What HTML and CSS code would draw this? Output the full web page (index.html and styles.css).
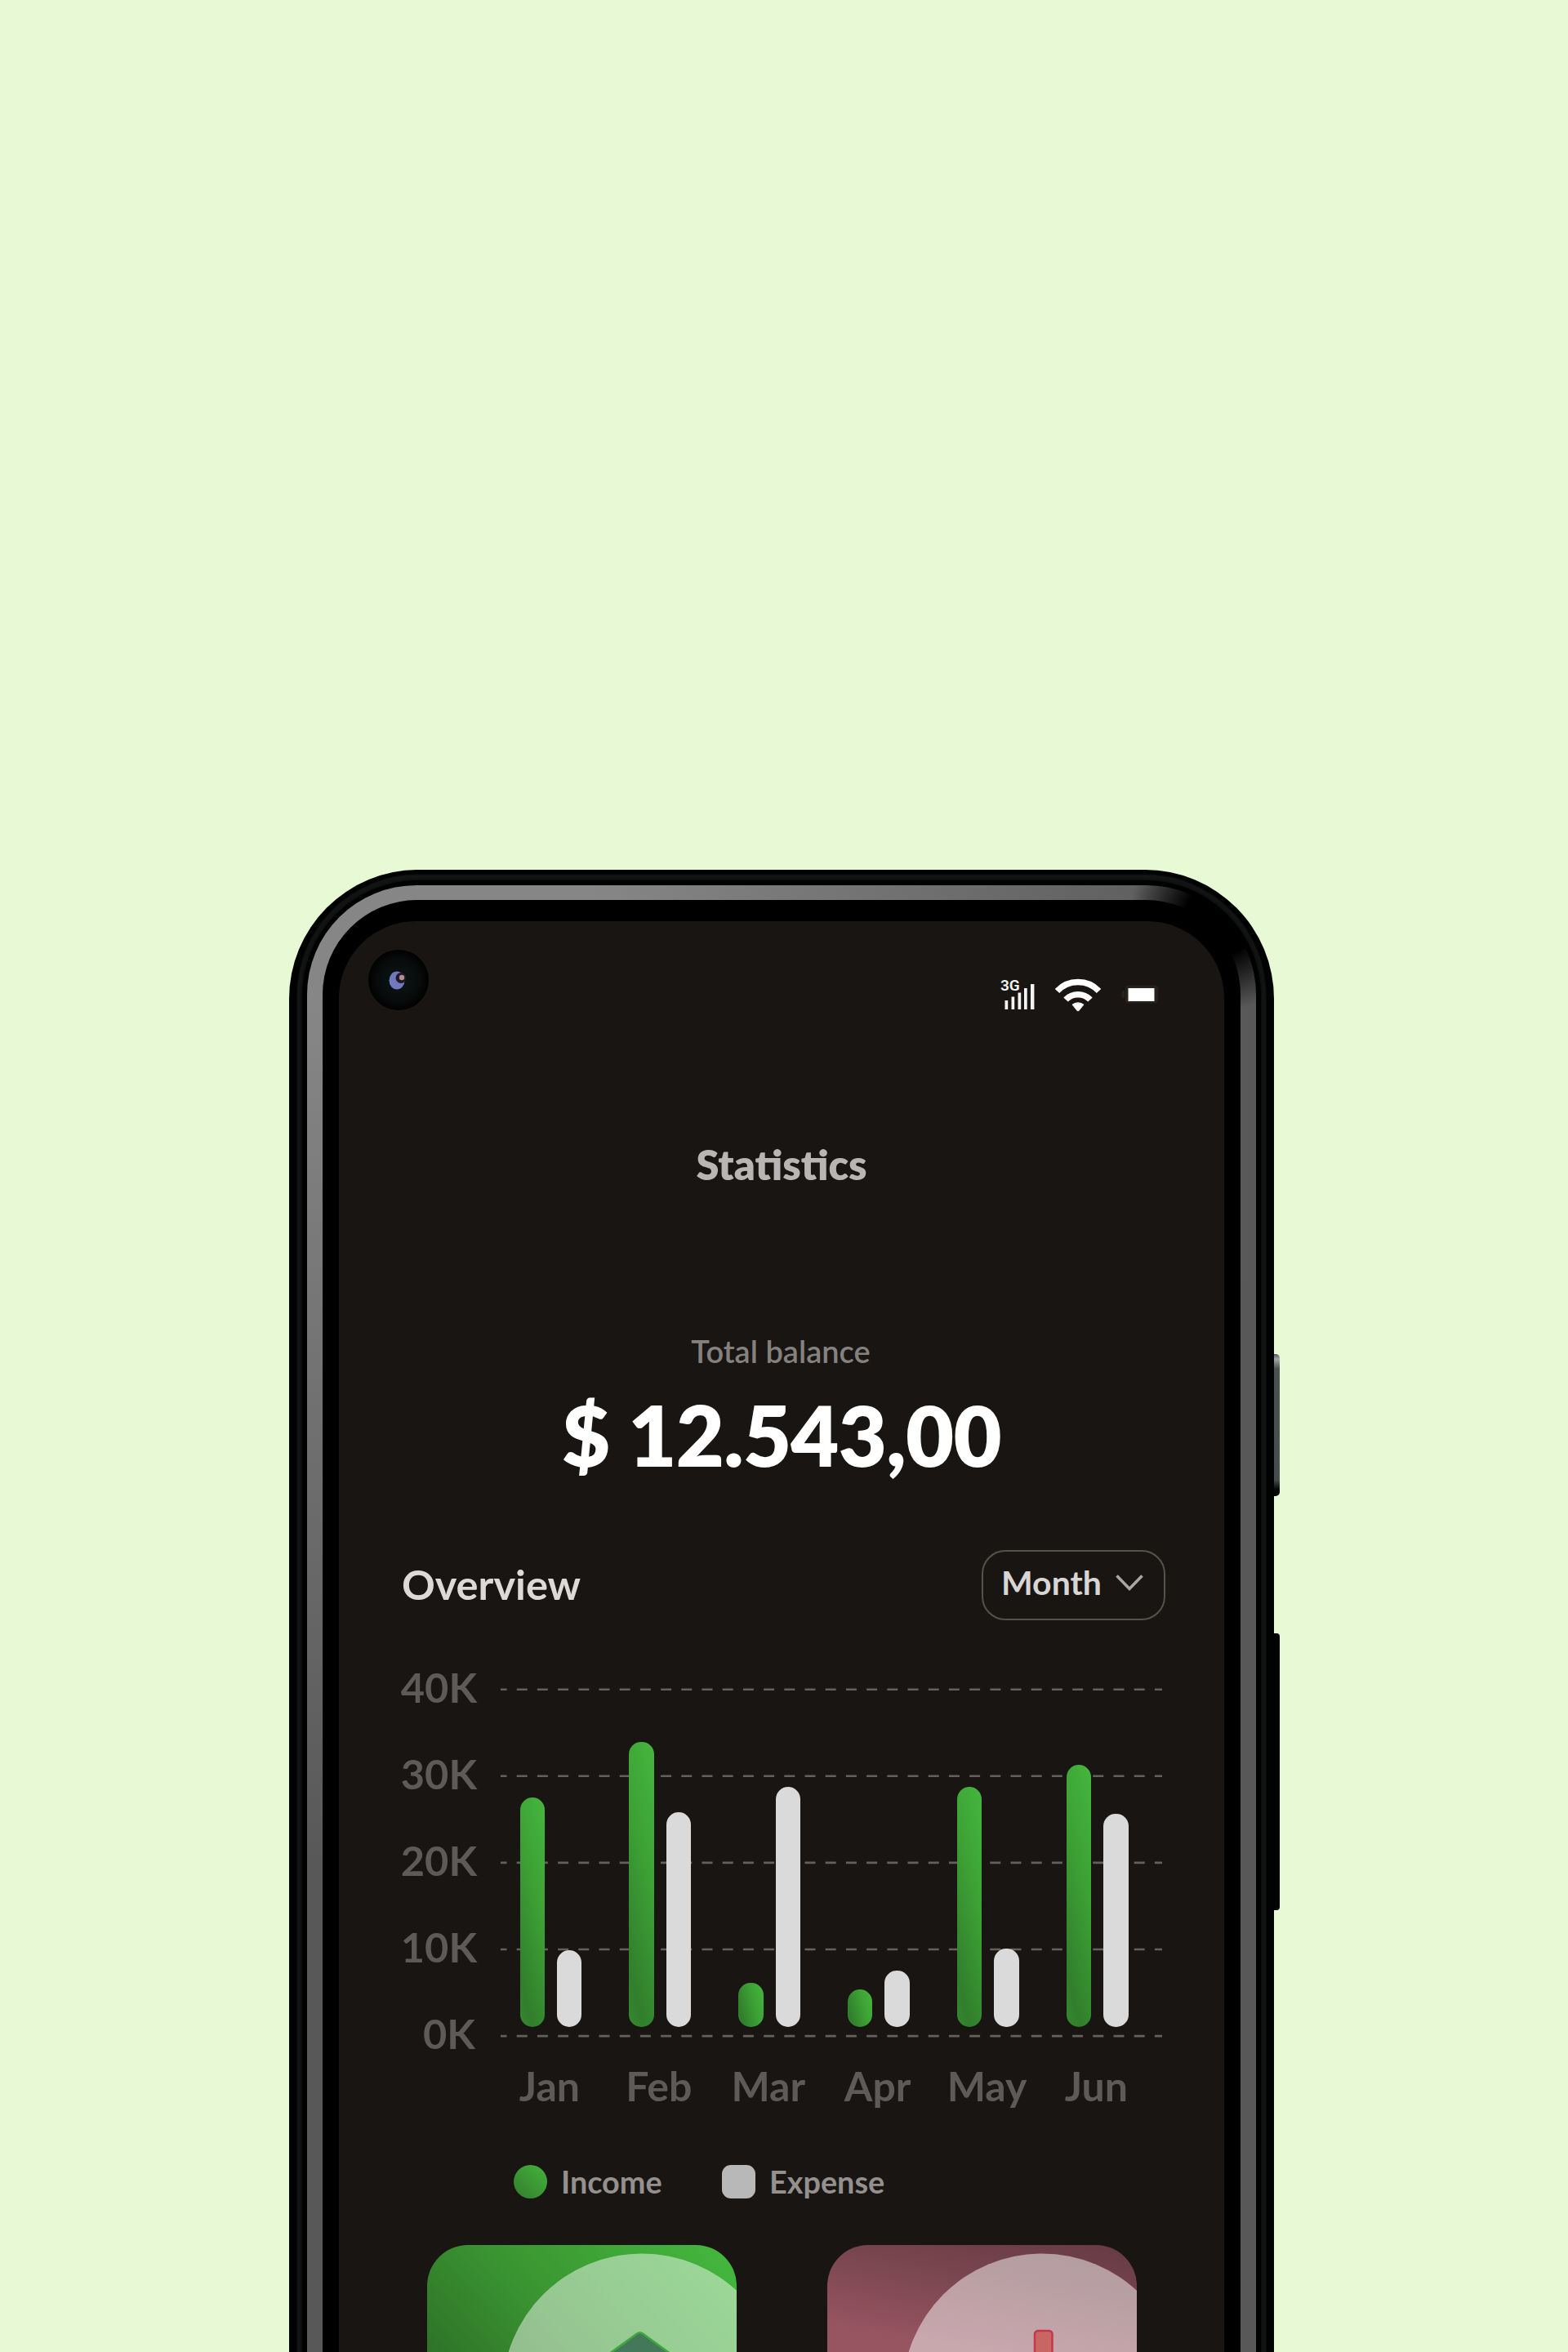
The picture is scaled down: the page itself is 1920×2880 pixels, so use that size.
FILE: index.html
```html
<!DOCTYPE html>
<html lang="en">
<head>
<meta charset="utf-8">
<title>Statistics</title>
<link rel="stylesheet" href="styles.css">
</head>
<body>
<main class="stage">
  <div class="phone">
    <span class="side-button power"></span>
    <span class="side-button volume"></span>
    <div class="shell"><div class="sheen"><div class="edge"><div class="ring"><div class="bezel">
      <div class="screen">
        <svg class="camera" width="76" height="76" viewBox="0 0 76 76">
          <defs>
            <radialGradient id="lens"><stop offset="0" stop-color="#0d1516"/><stop offset=".7" stop-color="#080b0b"/><stop offset="1" stop-color="#010101"/></radialGradient>
          </defs>
          <circle cx="38" cy="38" r="37" fill="url(#lens)"/>
          <ellipse cx="36" cy="38.500" rx="9.500" ry="11" fill="#7079bd"/>
          <circle cx="41" cy="35.500" r="6.500" fill="#1d1a26"/>
          <circle cx="42" cy="35" r="3.200" fill="#b58a92"/>
        </svg>

        <div class="status">
          <svg class="signal" width="44" height="49" viewBox="0 -8 44 49" fill="#f4f4f4">
            <text x="0" y="14.500" class="net">3G</text>
            <rect x="5.500" y="27" width="3.700" height="11"/>
            <rect x="13.500" y="22.500" width="3.700" height="15.500"/>
            <rect x="21.500" y="17.500" width="3.700" height="20.500"/>
            <rect x="29" y="12" width="3.700" height="26"/>
            <rect x="37" y="7" width="4.400" height="31"/>
          </svg>
          <svg class="wifi" width="56" height="41" viewBox="0 0 56 41">
            <g fill="none" stroke="#fff" stroke-width="7.500">
              <path d="M2.500 15.500C16 .8 40 .8 53.500 15.500"/>
              <path d="M13 26C21 17.500 35 17.500 43 26"/>
            </g>
            <path d="M20.500 32Q28 26.500 35.500 32L29.500 39.500Q28 41 26.500 39.500Z" fill="#fff"/>
          </svg>
          <svg class="battery" width="46" height="26" viewBox="0 0 46 26">
            <rect x="4" y="1.500" width="40" height="22" rx="4" fill="#26211f"/>
            <rect x="0" y="8" width="3" height="9" fill="#26211f"/>
            <rect x="7.500" y="5" width="32" height="16" fill="#fff"/>
          </svg>
        </div>

        <h1 class="title">Statistics</h1>
        <p class="balance-label">Total balance</p>
        <p class="balance">$ 12.543,00</p>

        <div class="overview">
          <h2 class="overview-title">Overview</h2>
          <div class="period">
            <span>Month</span>
            <svg width="34" height="22" viewBox="0 0 34 22"><path d="M1.500 2.500L17 18.500L32.500 2.500" fill="none" stroke="#aaa6a3" stroke-width="3.600"/></svg>
          </div>
        </div>

        <div class="chart">
          <div class="scale"><span>40K</span><span>30K</span><span>20K</span><span>10K</span><span class="zero">0K</span></div>
          <div class="plot">
            <svg class="lines" width="810" height="428" viewBox="0 0 810 428">
              <path d="M0 1.700H810M0 107.800H810M0 213.900H810M0 320H810M0 426.100H810" stroke="#64605d" stroke-width="2.600" stroke-dasharray="13 12.200" stroke-dashoffset="5.500"/>
            </svg>
            <div class="bars">
              <div class="pair"><i class="bar in" style="height:281px"></i><i class="bar out" style="height:94px"></i></div>
              <div class="pair"><i class="bar in" style="height:349px"></i><i class="bar out" style="height:263px"></i></div>
              <div class="pair"><i class="bar in" style="height:54px"></i><i class="bar out" style="height:294px"></i></div>
              <div class="pair"><i class="bar in" style="height:46px"></i><i class="bar out" style="height:69px"></i></div>
              <div class="pair"><i class="bar in" style="height:294px"></i><i class="bar out" style="height:96px"></i></div>
              <div class="pair"><i class="bar in" style="height:321px"></i><i class="bar out" style="height:261px"></i></div>
            </div>
          </div>
        </div>
        <div class="months"><span>Jan</span><span>Feb</span><span>Mar</span><span>Apr</span><span>May</span><span>Jun</span></div>

        <div class="legend">
          <i class="key income"></i><span class="income-text">Income</span>
          <i class="key expense"></i><span>Expense</span>
        </div>

        <div class="cards">
          <div class="card card-income">
            <svg width="379" height="400" viewBox="0 0 379 400">
              <circle cx="263" cy="181.500" r="171" fill="#fff" fill-opacity=".47"/>
              <path d="M257 108.500Q260.500 106 264 108.500L339 163V240H182V163Z" fill="#43795a" stroke="#3fa83d" stroke-width="2.500"/>
            </svg>
          </div>
          <div class="card card-expense">
            <svg width="379" height="400" viewBox="0 0 379 400">
              <circle cx="263" cy="181.500" r="171" fill="#fff" fill-opacity=".49"/>
              <rect x="254" y="105" width="21.500" height="150" rx="4" fill="#c86663" stroke="#c7374a" stroke-width="2.500"/>
            </svg>
          </div>
        </div>
      </div>
    </div></div></div></div></div>
  </div>
</main>
</body>
</html>
```
FILE: styles.css
```css
* { box-sizing: border-box; }
body { margin: 0; background: #e8f9d5; font-family: Lato, sans-serif; }
h1, h2, p { margin: 0; }
svg { display: block; flex: none; }

.stage { width: 1920px; height: 2880px; overflow: hidden; padding: 1065px 0 0 354px; }

/* Device body */
.phone { position: relative; width: 1206px; height: 1815px; }
.side-button { position: absolute; left: 1200px; width: 13px; }
.power { top: 593px; height: 174px; border-radius: 0 5px 5px 0; background: linear-gradient(#555 0, #a5a5a5 6px, #4c5152 18px, #474d4e 154px, #050505 166px); }
.volume { top: 935px; height: 339px; border-radius: 0 4px 4px 0; background: #000; }
.shell { position: relative; height: 1815px; padding: 6px 10px 0; background: #010302; border-radius: 158px 158px 0 0; }
.sheen { height: 100%; padding: 7px 6px 0; background: #121313; border-radius: 148px 148px 0 0; box-shadow: 0 0 3px #121313; }
.edge { height: 100%; padding: 6px 6px 0; background: #000; border-radius: 142px 142px 0 0; box-shadow: 0 0 3px #000; }
.ring {
  height: 100%; padding: 18px 19px 0; border-radius: 134px 134px 0 0;
  background:
    radial-gradient(circle at 1118px 42px, #000 44px, rgba(0,0,0,0) 112px),
    linear-gradient(rgba(88,88,88,0) 150px, #585858 1200px),
    linear-gradient(to right, #868686 30%, #585858);
}
.bezel { height: 100%; padding: 26px 20px 0; background: #000; border-radius: 116px 116px 0 0; }
.screen {
  position: relative; height: 100%; padding-top: 70px; background: #191512;
  border-radius: 94px 94px 0 0; display: flex; flex-direction: column;
}
.camera { position: absolute; left: 35px; top: 34px; }

.status { display: flex; height: 41px; padding-left: 810px; }
.signal { margin-top: -8px; }
.wifi { margin-left: 23px; }
.battery { margin: 7px 0 0 26px; }
.net { font: 600 19px Roboto, sans-serif; }

/* Balance */
.title { margin-top: 157px; font-size: 50.500px; line-height: 60px; font-weight: 800; color: #b8b6b5; text-align: center; }
.balance-label { margin-top: 176px; padding-right: 2px; font-size: 38px; line-height: 44px; font-weight: 600; color: #85817f; text-align: center; }
.balance { margin-top: 19px; font-size: 102px; line-height: 123px; height: 119px; font-weight: 800; letter-spacing: -.700px; color: #fff; text-align: center; }

/* Overview heading */
.overview { display: flex; align-items: center; justify-content: space-between; height: 86px; margin: 84px 72px 0 77px; }
.overview-title { padding-bottom: 3px; font-size: 50.500px; line-height: 60px; font-weight: 700; color: #dcdad9; }
.period {
  display: flex; align-items: center; gap: 17px; width: 225px; height: 86px; padding: 0 0 7px 22px;
  border: 2px solid #55514d; border-radius: 29px; font-size: 41px; font-weight: 700; color: #d8d6d5;
}

/* Bar chart */
.chart { display: flex; height: 460px; margin-top: 51px; }
.scale { width: 169px; padding-top: 1px; text-align: right; }
.scale span { display: block; height: 106.1px; font-size: 50.500px; line-height: 60px; font-weight: 700; color: #5e5a57; }
.scale .zero { padding-right: 2px; }
.plot { display: grid; margin: 32px 0 0 29px; height: 428px; }
.lines, .bars { grid-area: 1 / 1; }
.bars { display: flex; align-items: flex-end; gap: 58.200px; padding: 0 0 13px 23.500px; }
.pair { display: flex; align-items: flex-end; gap: 15px; }
.bar { width: 30.350px; border-radius: 15px; }
.in { background: linear-gradient(255deg, #45b73d, #3da135 40%, #317e2c 85%, #36882f); }
.out { background: #dadada; }
.months { display: grid; grid-template-columns: repeat(6, 133.900px); margin: 29px 0 0 191px; font-size: 50px; line-height: 60px; font-weight: 700; color: #5e5a57; text-align: center; }

/* Legend */
.legend { display: flex; align-items: center; height: 41px; margin: 67px 0 0 214px; font-size: 37.800px; font-weight: 700; color: #94908e; }
.key { width: 41px; height: 41px; margin-right: 17px; }
.income { border-radius: 50%; background: linear-gradient(to bottom left, #44b43d, #3a9232 60%, #327f2d); }
.income-text { width: 197px; }
.expense { border-radius: 11px; background: #b9b8b8; }

/* Summary cards */
.cards { display: flex; gap: 111px; margin: 57px 0 0 108px; }
.card { width: 379px; height: 400px; border-radius: 50px; overflow: hidden; }
.card-income { background: linear-gradient(to bottom left, #44b93e, #3a9531 40%, #2f7429 65%, #2a6526); }
.card-expense { background: linear-gradient(192deg, #653b45, #75434b 14%, #945460 36%, #a85f6a); }
```
